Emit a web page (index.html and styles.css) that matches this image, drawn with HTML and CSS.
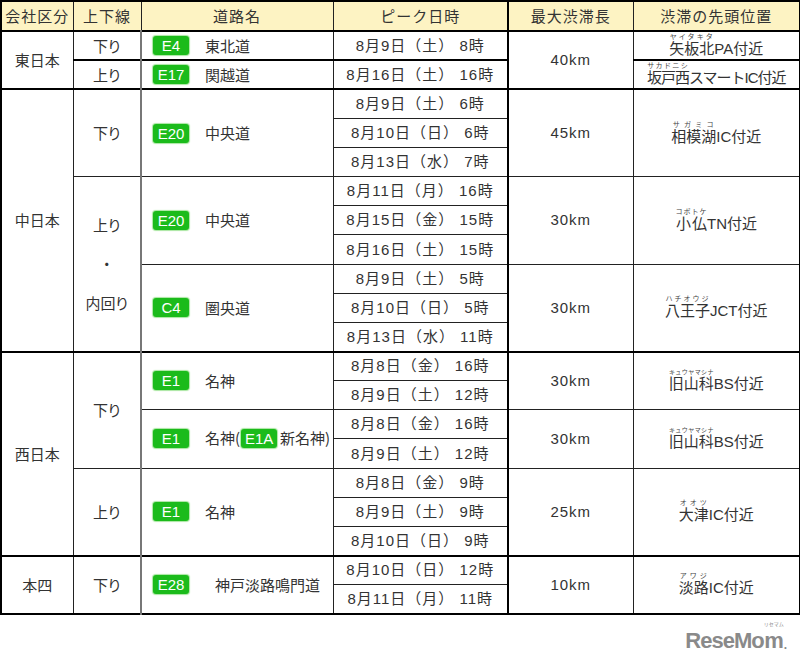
FILE: index.html
```html
<!DOCTYPE html>
<html lang="ja">
<head>
<meta charset="utf-8">
<link rel="stylesheet" href="styles.css">
</head>
<body>
<table class="t">
<colgroup>
<col class="c1"><col class="c2"><col class="c3"><col class="c4"><col class="c5"><col class="c6">
</colgroup>
<thead>
<tr><th>会社区分</th><th>上下線</th><th>道路名</th><th class="bl">ピーク日時</th><th class="thick">最大渋滞長</th><th>渋滞の先頭位置</th></tr>
</thead>
<tbody class="sec">
<tr><td rowspan="2" class="co">東日本</td><td class="dir">下り</td><td class="road"><div class="rd"><span class="badge">E4</span><span class="nm">東北道</span></div></td><td class="date">8月9日（土） 8時</td><td rowspan="2" class="len">40km</td><td class="loc"><ruby>矢板北<rt>ヤイタキタ</rt></ruby>PA付近</td></tr>
<tr class="split"><td class="dir">上り</td><td class="road"><div class="rd"><span class="badge">E17</span><span class="nm">関越道</span></div></td><td class="date">8月16日（土） 16時</td><td class="loc tight"><ruby>坂戸西<rt>サカドニシ</rt></ruby>スマートIC付近</td></tr>
</tbody>
<tbody class="sec">
<tr><td rowspan="9" class="co">中日本</td><td rowspan="3" class="dir">下り</td><td rowspan="3" class="road"><div class="rd"><span class="badge">E20</span><span class="nm">中央道</span></div></td><td class="date">8月9日（土） 6時</td><td rowspan="3" class="len">45km</td><td rowspan="3" class="loc"><ruby>相模湖<rt>サガミコ</rt></ruby>IC付近</td></tr>
<tr><td class="date">8月10日（日） 6時</td></tr>
<tr><td class="date">8月13日（水） 7時</td></tr>
<tr><td rowspan="6" class="dir multi">上り<br>・<br>内回り</td><td rowspan="3" class="road"><div class="rd"><span class="badge">E20</span><span class="nm">中央道</span></div></td><td class="date">8月11日（月） 16時</td><td rowspan="3" class="len">30km</td><td rowspan="3" class="loc"><ruby>小仏<rt>コボトケ</rt></ruby>TN付近</td></tr>
<tr><td class="date">8月15日（金） 15時</td></tr>
<tr><td class="date">8月16日（土） 15時</td></tr>
<tr><td rowspan="3" class="road"><div class="rd"><span class="badge">C4</span><span class="nm">圏央道</span></div></td><td class="date">8月9日（土） 5時</td><td rowspan="3" class="len">30km</td><td rowspan="3" class="loc"><ruby>八王子<rt>ハチオウジ</rt></ruby>JCT付近</td></tr>
<tr><td class="date">8月10日（日） 5時</td></tr>
<tr><td class="date">8月13日（水） 11時</td></tr>
</tbody>
<tbody class="sec">
<tr><td rowspan="7" class="co">西日本</td><td rowspan="4" class="dir">下り</td><td rowspan="2" class="road"><div class="rd"><span class="badge">E1</span><span class="nm">名神</span></div></td><td class="date">8月8日（金） 16時</td><td rowspan="2" class="len">30km</td><td rowspan="2" class="loc"><ruby class="sm">旧山科<rt>キュウヤマシナ</rt></ruby>BS付近</td></tr>
<tr><td class="date">8月9日（土） 12時</td></tr>
<tr><td rowspan="2" class="road"><div class="rd"><span class="badge">E1</span><span class="nm">名神(<span class="badge in">E1A</span>新名神)</span></div></td><td class="date">8月8日（金） 16時</td><td rowspan="2" class="len">30km</td><td rowspan="2" class="loc"><ruby class="sm">旧山科<rt>キュウヤマシナ</rt></ruby>BS付近</td></tr>
<tr><td class="date">8月9日（土） 12時</td></tr>
<tr><td rowspan="3" class="dir">上り</td><td rowspan="3" class="road"><div class="rd"><span class="badge">E1</span><span class="nm">名神</span></div></td><td class="date">8月8日（金） 9時</td><td rowspan="3" class="len">25km</td><td rowspan="3" class="loc"><ruby>大津<rt>オオツ</rt></ruby>IC付近</td></tr>
<tr><td class="date">8月9日（土） 9時</td></tr>
<tr><td class="date">8月10日（日） 9時</td></tr>
</tbody>
<tbody class="sec">
<tr><td rowspan="2" class="co">本四</td><td rowspan="2" class="dir">下り</td><td rowspan="2" class="road"><div class="rd"><span class="badge">E28</span><span class="nm wide">神戸淡路鳴門道</span></div></td><td class="date">8月10日（日） 12時</td><td rowspan="2" class="len">10km</td><td rowspan="2" class="loc"><ruby>淡路<rt>アワジ</rt></ruby>IC付近</td></tr>
<tr><td class="date">8月11日（月） 11時</td></tr>
</tbody>
</table>
<div class="logo"><div class="lg"><span class="lw">ReseMo</span><span class="lm"><span class="lr">リセマム</span><span class="lb">m</span></span><span class="dot">.</span></div></div>
</body>
</html>
```
FILE: styles.css
```css
body {
  margin: 0;
  background: #fff;
  font-family: "Noto Sans CJK JP", sans-serif;
  color: #333;
}
.t {
  border-collapse: collapse;
  table-layout: fixed;
  width: 799px;
  border: 2px solid #000;
}
.c1 { width: 72px; }
.c2 { width: 68px; }
.c3 { width: 192px; }
.c4 { width: 175px; }
.c5 { width: 125px; }
.c6 { width: 167px; }
th, td {
  border: 1px solid #222;
  padding: 0;
  text-align: center;
  vertical-align: middle;
  font-size: 15px;
  line-height: 18px;
  font-weight: normal;
}
thead tr { height: 30px; }
tbody tr { height: 29.15px; }
thead th {
  background: #fdf3c3;
  letter-spacing: 1px;
  color: #333;
}
.sec { border-top: 2px solid #000; }
.split td { border-top: 2px solid #000; }
.dir { font-feature-settings: "palt"; }
.multi { line-height: 39px; }
.road {
  border-left: 2px solid #777;
  text-align: left;
}
.rd {
  display: flex;
  align-items: center;
  padding-left: 11px;
}
.badge {
  display: inline-block;
  width: 36px;
  height: 19px;
  line-height: 19px;
  border-radius: 3px;
  background: #1bbb1b;
  box-shadow: 0 0 1px 1px #a8e6a0;
  color: #fff;
  font-family: "Liberation Sans", sans-serif;
  font-size: 15px;
  text-align: center;
}
.badge.in { margin: 0 3px 0 1px; }
.nm { margin-left: 16px; }
.nm.wide { margin-left: 26px; }
.date {
  font-family: "Liberation Sans", "Noto Sans CJK JP", sans-serif;
  letter-spacing: 1px;
}
.len, .thick {
  border-left: 2px solid #000;
  font-family: "Liberation Sans", sans-serif;
  letter-spacing: 1px;
}
.thick {
  font-family: "Noto Sans CJK JP", sans-serif;
}
.loc {
  font-family: "Liberation Sans", "Noto Sans CJK JP", sans-serif;
}
.loc.tight { letter-spacing: -1px; }
ruby rt {
  font-size: 7px;
  line-height: 8px;
  color: #444;
  letter-spacing: 1px;
}
ruby.sm rt {
  font-size: 6px;
  letter-spacing: 0;
}
.logo {
  display: flex;
  justify-content: flex-end;
  padding-right: 14px;
  margin-top: 6px;
}
.lg {
  display: flex;
  align-items: flex-end;
  font-family: "Liberation Sans", sans-serif;
  font-weight: bold;
  font-size: 22px;
  line-height: 20px;
  letter-spacing: -1px;
  color: #8a8a8a;
}
.lm {
  display: flex;
  flex-direction: column;
  align-items: center;
}
.lr {
  font-family: "Noto Sans CJK JP", sans-serif;
  font-weight: normal;
  font-size: 5px;
  line-height: 6px;
  letter-spacing: 0;
  margin-bottom: 4px;
}
.dot { font-size: 12px; line-height: 12px; }
```
